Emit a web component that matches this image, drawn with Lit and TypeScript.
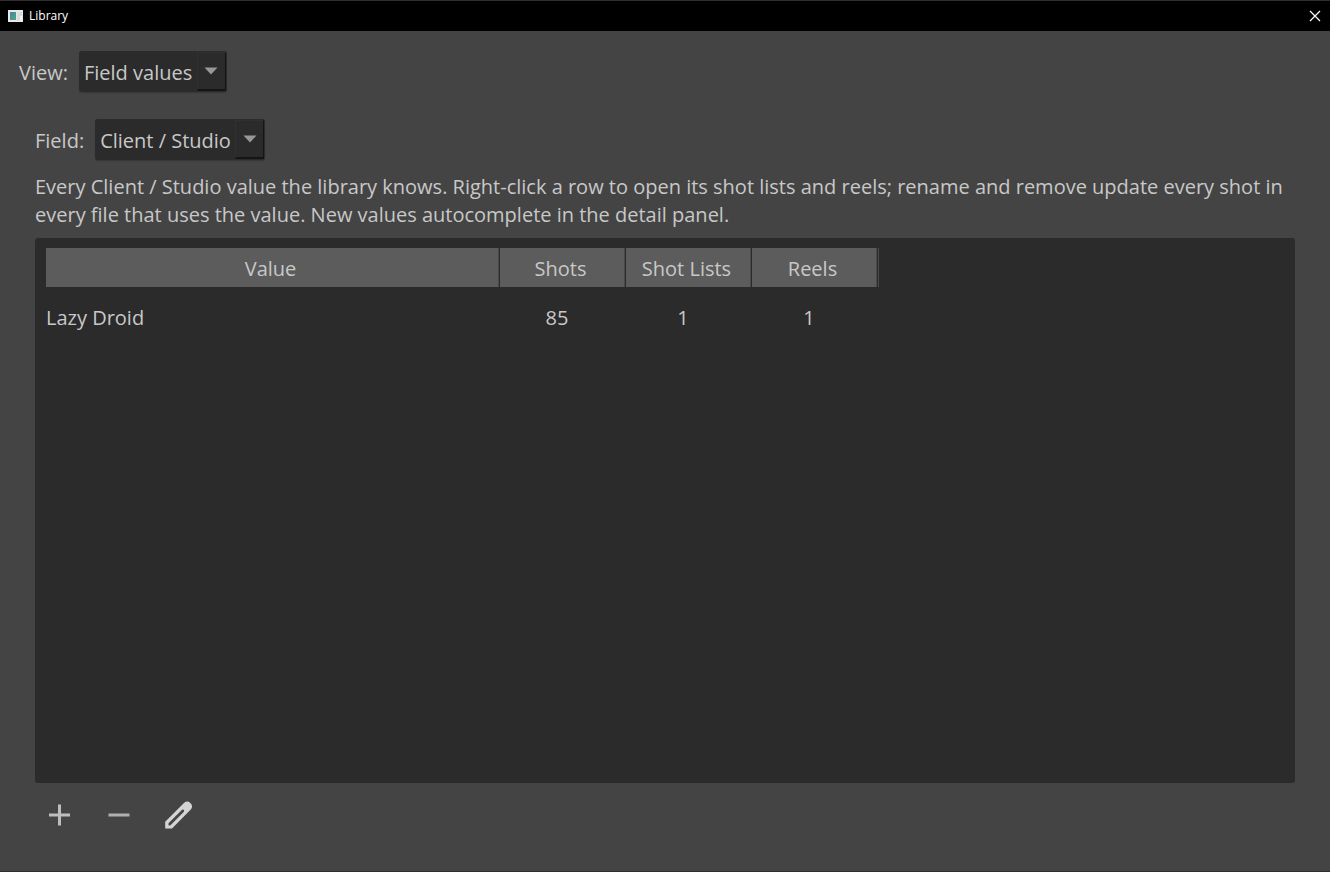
import { LitElement, html, css, svg } from "lit";
import { customElement, state } from "lit/decorators.js";

interface FieldValue {
  value: string;
  shots: number;
  shotLists: number;
  reels: number;
}

const arrow = html`<svg class="arrow" viewBox="0 0 14 8" aria-hidden="true">
  ${svg`<path d="M0.5 0.5H13.5L7 7.5Z" fill="#989898" />`}
</svg>`;

@customElement("app-root")
export class AppRoot extends LitElement {
  static styles = css`
    :host {
      display: flex;
      flex-direction: column;
      box-sizing: border-box;
      min-height: 100vh;
      background: #444;
      border-top: 1px solid #2e2e2e;
      border-bottom: 1px solid #2e2e2e;
      color: #c8c8c8;
      font: 20px/28px "Open Sans", "Noto Sans", sans-serif;
    }
    *, *::before, *::after { box-sizing: border-box; }
    button, select { font: inherit; color: inherit; margin: 0; border: 0; background: none; }

    .titlebar {
      display: flex;
      align-items: center;
      gap: 6px;
      height: 30px;
      padding-left: 8px;
      background: #000;
      color: #fff;
    }
    .app-icon { width: 15px; height: 12px; display: block; }
    .title { flex: 1; margin: 0; font-size: 12px; line-height: 16px; font-weight: 400; }
    .close { display: grid; place-items: center; width: 30px; height: 28px; padding: 0; }
    .close svg { width: 12px; height: 12px; display: block; }

    .row { display: flex; align-items: center; gap: 11px; }
    .row label { padding-top: 2px; }
    .view-row { padding: 20px 19px 0; }
    .content { flex: 1; display: flex; flex-direction: column; padding: 27px 35px 32px; }

    .combo { display: grid; grid-template-columns: 1fr 30px; }
    .combo select {
      grid-area: 1 / 1 / 2 / 3;
      appearance: none;
      height: 41px;
      padding: 2px 34px 0 5px;
      border-radius: 3px;
      background: #2b2b2b;
      box-shadow: 0 1px 1px #383838;
    }
    .combo-end {
      grid-area: 1 / 2 / 2 / 3;
      display: grid;
      place-items: center;
      height: 39px;
      margin: 1px 1px 1px 0;
      border: solid;
      border-width: 1px 1px 2px 1px;
      border-color: #303030 #151515 #151515 #303030;
      pointer-events: none;
    }
    .arrow { width: 14px; height: 8px; display: block; }

    .hint { margin: 13px 0 9px; }

    .panel {
      flex: 1;
      padding: 10px 11px;
      border-radius: 3px;
      background: #2b2b2b;
      overflow: auto;
    }
    table { border-collapse: separate; border-spacing: 0; table-layout: fixed; width: 832px; }
    col.wide { width: 454px; }
    th {
      height: 39px;
      padding: 2px 4px 0 0;
      background: #5c5c5c;
      border-right: 1px solid #2b2b2b;
      box-shadow: inset -1px 0 #4a4a4a;
      font-weight: 400;
      text-align: center;
    }
    th:last-child { box-shadow: inset -1px 0 #4a4a4a, 1px 0 #4a4a4a; }
    td { height: 60px; padding: 2px 12px 0 0; text-align: center; }
    td.name { text-align: left; }

    .tools { display: flex; gap: 12px; padding-top: 8px; }
    .tool { display: grid; place-items: center; width: 48px; height: 48px; padding: 0; }
    .tool svg { width: 30px; height: 30px; display: block; }
  `;

  @state() private rows: FieldValue[] = [
    { value: "Lazy Droid", shots: 85, shotLists: 1, reels: 1 },
  ];

  render() {
    return html`
      <header class="titlebar">
        <svg class="app-icon" viewBox="0 0 15 12" aria-hidden="true">
          <defs>
            <linearGradient id="screen" x1="0" y1="0" x2="1" y2="1">
              <stop offset="0" stop-color="#4a7fb0" />
              <stop offset="1" stop-color="#4fa878" />
            </linearGradient>
          </defs>
          <rect width="15" height="12" fill="#e6e8ea" />
          <rect x="2" y="2" width="6" height="8" fill="url(#screen)" />
          <rect x="9" y="2" width="3" height="9" fill="#dcdcdc" />
          <rect x="12" y="2" width="2" height="4" fill="#c9dce6" />
          <rect x="12" y="6" width="2" height="5" fill="#f4f4f4" />
        </svg>
        <h1 class="title">Library</h1>
        <button class="close" aria-label="Close">
          <svg viewBox="0 0 12 12"><path d="M1 1L11 11M11 1L1 11" stroke="#fff" stroke-width="1.2" /></svg>
        </button>
      </header>

      <div class="row view-row">
        <label for="view">View:</label>
        <div class="combo">
          <select id="view"><option>Field values</option></select>
          <span class="combo-end">${arrow}</span>
        </div>
      </div>

      <main class="content">
        <div class="row">
          <label for="field">Field:</label>
          <div class="combo">
            <select id="field"><option>Client / Studio</option></select>
            <span class="combo-end">${arrow}</span>
          </div>
        </div>
        <p class="hint">
          Every Client / Studio value the library knows. Right-click a row to open its shot lists and reels; rename and remove update every shot in every file that uses the value. New values autocomplete in the detail panel.
        </p>
        <div class="panel">
          <table>
            <colgroup><col class="wide" /><col /><col /><col /></colgroup>
            <thead>
              <tr><th scope="col">Value</th><th scope="col">Shots</th><th scope="col">Shot Lists</th><th scope="col">Reels</th></tr>
            </thead>
            <tbody>
              ${this.rows.map((r) => html`<tr>
                <td class="name">${r.value}</td><td>${r.shots}</td><td>${r.shotLists}</td><td>${r.reels}</td>
              </tr>`)}
            </tbody>
          </table>
        </div>
        <div class="tools">
          <button class="tool" aria-label="Add value">
            <svg viewBox="0 0 30 30"><path d="M15.5 4.5V25.5M5 15H26" stroke="#bdbdbd" stroke-width="3" fill="none" /></svg>
          </button>
          <button class="tool" aria-label="Remove value">
            <svg viewBox="0 0 30 30"><path d="M4.500 15H25.500" stroke="#b0b0b0" stroke-width="3" /></svg>
          </button>
          <button class="tool" aria-label="Rename value">
            <svg viewBox="0 0 30 30">
              <path fill="#d4d4d4" fill-rule="evenodd" d="M1.200 28.500V21.800L20.200 2.800C22 1.200 24.500 1.200 26.300 3C28.500 5 28.600 7.500 27 9.300L8 28.500Z M4.500 25.400H6.200L19.700 11.900C21 10.400 19.300 8.700 17.800 10L4.500 23.300Z" />
            </svg>
          </button>
        </div>
      </main>
    `;
  }
}
